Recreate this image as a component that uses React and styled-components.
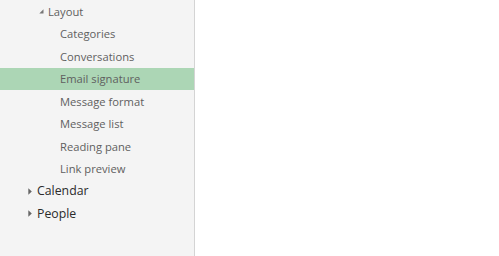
import styled, { createGlobalStyle } from "styled-components";

const GlobalStyle = createGlobalStyle`
    html, body {
        margin: 0;
        padding: 0;
        background: #ffffff;
        font-family: "Segoe UI", "Open Sans", "Noto Sans", sans-serif;
    }
`

const tree = [
    {
        label: "Layout",
        open: true,
        children: [
            "Categories",
            "Conversations",
            "Email signature",
            "Message format",
            "Message list",
            "Reading pane",
            "Link preview",
        ],
    },
    { label: "Calendar", top: true },
    { label: "People", top: true },
]

export default function App() {
    const selected = "Email signature";
    return (
        <>
            <GlobalStyle />
            <Page>
                <Sidebar>
                    {tree.map(node => (
                        <div key={node.label}>
                            <Row indent={node.top ? 28 : 39} strong={node.top}>
                                <Arrow open={node.open} />
                                <span>{node.label}</span>
                            </Row>
                            {node.open && node.children.map(child => (
                                <Row key={child} indent={60} leaf selected={child === selected}>
                                    <span>{child}</span>
                                </Row>
                            ))}
                        </div>
                    ))}
                </Sidebar>
                <Content />
            </Page>
        </>
    )
}

const Page = styled.div`
    display: flex;
    width: 100%;
    height: 256px;
    overflow: hidden;
`
const Sidebar = styled.div`
    width: 194px;
    flex-shrink: 0;
    background: #f4f4f4;
    border-right: 1px solid #d4d4d4;
    box-shadow: 1px 0 1px #ececec;
`
const Content = styled.div`
    flex: 1;
    background: #ffffff;
`
const Row = styled.div`
    height: 22.5px;
    display: flex;
    align-items: center;
    padding-left: ${p => p.indent}px;
    background: ${p => p.selected ? "#acd6b5" : "transparent"};
    color: ${p => p.strong ? "#2b2b2b" : "#5f5f5f"};
    font-size: ${p => p.strong ? "12.3px" : "11.2px"};
    font-weight: ${p => p.strong ? 500 : 400};
    white-space: nowrap;
    span {
        line-height: 1;
    }
`
const Arrow = ({ open }) => (
    <ArrowBox>
        {open ? (
            <svg width="5" height="5" viewBox="0 0 5 5">
                <path d="M4.5 0.3 L4.5 4.5 L0.3 4.5 Z" fill="#777" />
            </svg>
        ) : (
            <svg width="4" height="7" viewBox="0 0 4 7">
                <path d="M0.3 0.3 L3.8 3.5 L0.3 6.7 Z" fill="#666" />
            </svg>
        )}
    </ArrowBox>
)
const ArrowBox = styled.span`
    width: 9px;
    display: inline-flex;
    align-items: center;
    justify-content: flex-start;
`
